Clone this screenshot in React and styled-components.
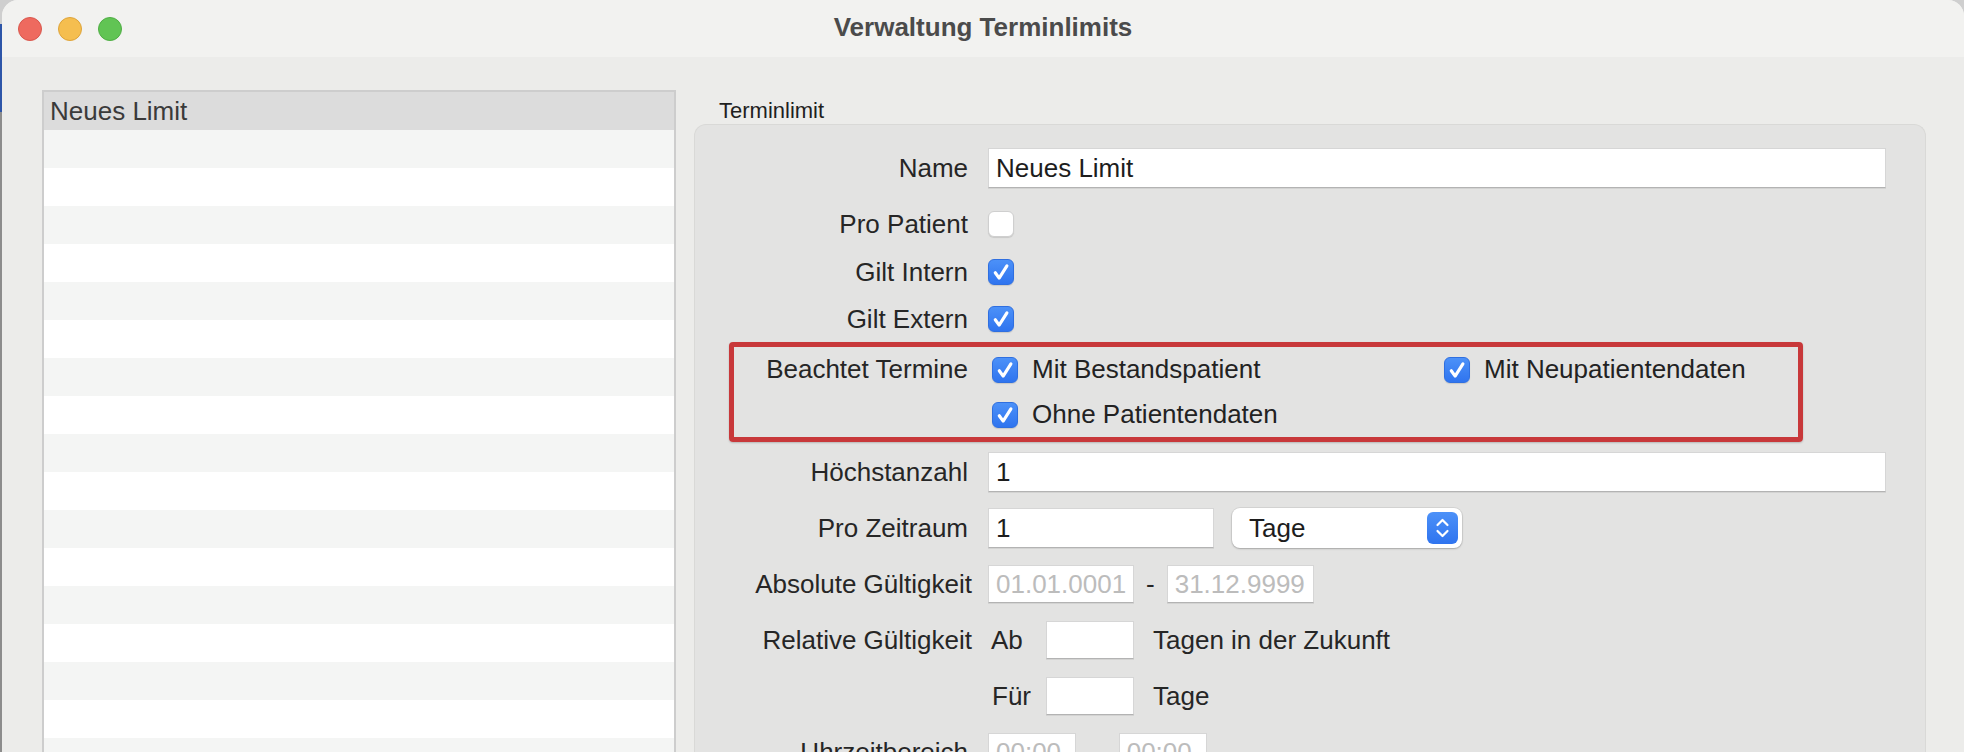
import React from "react";
import styled, { createGlobalStyle } from "styled-components";

const GlobalStyle = createGlobalStyle`
  html, body {
    margin: 0;
    padding: 0;
  }
  body {
    width: 1964px;
    height: 752px;
    overflow: hidden;
    font-family: "Liberation Sans", Arial, sans-serif;
    background: #2d55a8;
  }
`;

const Desktop = styled.div`
  display: flex;
  height: 752px;
  background: linear-gradient(
    to bottom,
    #cfcfcf 0,
    #cfcfcf 24px,
    #2d55a8 24px,
    #2d55a8 112px,
    #8c8c8c 112px
  );
`;

const Window = styled.div`
  flex: 1;
  margin-left: 2px;
  display: flex;
  flex-direction: column;
  background: #ececea;
  border-radius: 16px 16px 0 0;
  overflow: hidden;
`;

const TitleBar = styled.div`
  height: 57px;
  flex-shrink: 0;
  display: grid;
  grid-template-columns: 1fr auto 1fr;
  align-items: center;
  padding: 0 16px;
  background: #f2f2f0;
`;

const Lights = styled.div`
  display: flex;
  gap: 16px;
`;

const Light = styled.span`
  width: 24px;
  height: 24px;
  border-radius: 50%;
  box-sizing: border-box;
  background: ${(p) => p.$color};
  border: 1px solid ${(p) => p.$edge};
`;

const Title = styled.div`
  margin-top: -3px;
  font-size: 26px;
  font-weight: bold;
  color: #4b4b4b;
`;

const Body = styled.div`
  flex: 1;
  display: flex;
  gap: 18px;
  padding: 33px 38px 0 40px;
  min-height: 0;
`;

const ListPane = styled.div`
  width: 634px;
  flex-shrink: 0;
  box-sizing: border-box;
  border: 2px solid #cdcdcd;
  border-bottom: none;
  background: #fff;
  overflow: hidden;
`;

const ListRow = styled.div`
  height: 38px;
  line-height: 38px;
  padding-left: 6px;
  font-size: 26px;
  color: #3a3a3a;
  background: ${(p) =>
    p.$header ? "#dcdcdc" : p.$odd ? "#f4f5f4" : "#ffffff"};
`;

const DetailPane = styled.div`
  flex: 1;
  display: flex;
  flex-direction: column;
`;

const Legend = styled.div`
  padding: 8px 0 0 25px;
  font-size: 22px;
  line-height: 26px;
  color: #1f1f1f;
`;

const GroupBox = styled.div`
  flex: 1;
  display: flex;
  flex-direction: column;
  padding: 19px 39px 0 0;
  background: #e3e3e2;
  border: 1px solid #d9d9d7;
  border-bottom: none;
  border-radius: 12px 12px 0 0;
`;

const FormRow = styled.div`
  display: grid;
  grid-template-columns: 273px 1fr;
  column-gap: 20px;
  align-items: center;
  height: ${(p) => p.$h || 48}px;
  margin-top: ${(p) => p.$mt || 0}px;
  flex-shrink: 0;
`;

const Label = styled.div`
  text-align: right;
  white-space: nowrap;
  font-size: 26px;
  color: #262626;
  margin-right: ${(p) => p.$shift || 0}px;
`;

const Controls = styled.div`
  display: flex;
  align-items: center;
  gap: ${(p) => p.$gap || 0}px;
`;

const Field = styled.input`
  box-sizing: border-box;
  width: ${(p) => (p.$w ? `${p.$w}px` : "100%")};
  height: ${(p) => p.$h || 40}px;
  padding: 0 7px;
  border: 1px solid #d6d6d6;
  border-bottom-color: #b3b3b3;
  box-shadow: 0 1px 0 rgba(0, 0, 0, 0.07);
  background: #fff;
  font: 26px "Liberation Sans", Arial, sans-serif;
  color: #1d1d1d;
  outline: none;
  &::placeholder {
    color: #bcbcbc;
  }
`;

const Box = styled.span`
  width: 26px;
  height: 26px;
  flex-shrink: 0;
  box-sizing: border-box;
  border-radius: 6px;
  display: flex;
  align-items: center;
  justify-content: center;
  background: ${(p) =>
    p.$checked ? "linear-gradient(#4c91f8, #2f74ef)" : "#ffffff"};
  border: 1px solid ${(p) => (p.$checked ? "#2f6fe0" : "#cfcfcf")};
  box-shadow: 0 1px 1px rgba(0, 0, 0, 0.12);
`;

const Option = styled.div`
  display: flex;
  align-items: center;
  gap: 14px;
  font-size: 26px;
  color: #222;
  white-space: nowrap;
`;

const Highlight = styled.div`
  box-sizing: border-box;
  width: 1074px;
  height: 100px;
  margin-left: 34px;
  flex-shrink: 0;
  border: 5px solid #c8383a;
  border-radius: 4px;
  box-shadow: 0 1px 2px rgba(0, 0, 0, 0.2);
  display: grid;
  grid-template-columns: 234px 428px 1fr;
  grid-template-rows: 45px 45px;
  column-gap: 24px;
  align-items: center;
`;

const Select = styled.div`
  box-sizing: border-box;
  width: 230px;
  height: 40px;
  display: flex;
  align-items: center;
  justify-content: space-between;
  padding: 0 4px 0 17px;
  background: #fff;
  border-radius: 8px;
  box-shadow: 0 0 0 1px rgba(0, 0, 0, 0.06), 0 1px 2px rgba(0, 0, 0, 0.22);
  font-size: 26px;
  color: #1d1d1d;
`;

const Stepper = styled.span`
  width: 31px;
  height: 32px;
  border-radius: 6px;
  background: linear-gradient(#4c91f8, #2f74ef);
  display: flex;
  align-items: center;
  justify-content: center;
`;

const Text = styled.span`
  font-size: 26px;
  color: #262626;
  white-space: nowrap;
  width: ${(p) => (p.$w ? `${p.$w}px` : "auto")};
  padding-left: ${(p) => p.$pl || 0}px;
  box-sizing: border-box;
  flex-shrink: 0;
`;

function Check({ checked }) {
  return (
    <Box $checked={checked}>
      {checked && (
        <svg width="26" height="26" viewBox="0 0 26 26">
          <path
            d="M6.8 13.8 L11 19.6 L19.4 6.4"
            fill="none"
            stroke="#fff"
            strokeWidth="3.4"
            strokeLinecap="round"
            strokeLinejoin="round"
          />
        </svg>
      )}
    </Box>
  );
}

const listRows = Array.from({ length: 17 }, (_, i) => i);

export default function App() {
  return (
    <>
      <GlobalStyle />
      <Desktop>
        <Window>
          <TitleBar>
            <Lights>
              <Light $color="#ee6a5f" $edge="#d9574d" />
              <Light $color="#f5be4f" $edge="#dea43a" />
              <Light $color="#61c454" $edge="#4fae44" />
            </Lights>
            <Title>Verwaltung Terminlimits</Title>
            <span />
          </TitleBar>

          <Body>
            <ListPane>
              <ListRow $header>Neues Limit</ListRow>
              {listRows.map((i) => (
                <ListRow key={i} $odd={i % 2 === 0} />
              ))}
            </ListPane>

            <DetailPane>
              <Legend>Terminlimit</Legend>
              <GroupBox>
                <FormRow>
                  <Label>Name</Label>
                  <Field readOnly value="Neues Limit" />
                </FormRow>
                <FormRow $mt={8}>
                  <Label>Pro Patient</Label>
                  <Controls>
                    <Check />
                  </Controls>
                </FormRow>
                <FormRow>
                  <Label>Gilt Intern</Label>
                  <Controls>
                    <Check checked />
                  </Controls>
                </FormRow>
                <FormRow $h={46}>
                  <Label>Gilt Extern</Label>
                  <Controls>
                    <Check checked />
                  </Controls>
                </FormRow>

                <Highlight>
                  <Label>Beachtet Termine</Label>
                  <Option>
                    <Check checked />
                    Mit Bestandspatient
                  </Option>
                  <Option>
                    <Check checked />
                    Mit Neupatientendaten
                  </Option>
                  <span />
                  <Option>
                    <Check checked />
                    Ohne Patientendaten
                  </Option>
                </Highlight>

                <FormRow $h={56} $mt={2}>
                  <Label>Höchstanzahl</Label>
                  <Field readOnly value="1" />
                </FormRow>
                <FormRow $h={56}>
                  <Label>Pro Zeitraum</Label>
                  <Controls $gap={18}>
                    <Field readOnly value="1" $w={226} />
                    <Select>
                      Tage
                      <Stepper>
                        <svg width="31" height="32" viewBox="0 0 31 32">
                          <path
                            d="M10.5 13 L15.5 8 L20.5 13 M10.5 19 L15.5 24 L20.5 19"
                            fill="none"
                            stroke="#fff"
                            strokeWidth="2.2"
                            strokeLinecap="round"
                            strokeLinejoin="round"
                          />
                        </svg>
                      </Stepper>
                    </Select>
                  </Controls>
                </FormRow>
                <FormRow $h={56}>
                  <Label $shift={-4}>Absolute Gültigkeit</Label>
                  <Controls $gap={12}>
                    <Field readOnly $w={146} $h={38} placeholder="01.01.0001" />
                    <Text>-</Text>
                    <Field readOnly $w={147} $h={38} placeholder="31.12.9999" />
                  </Controls>
                </FormRow>
                <FormRow $h={56}>
                  <Label $shift={-4}>Relative Gültigkeit</Label>
                  <Controls>
                    <Text $w={58} $pl={3}>
                      Ab
                    </Text>
                    <Field readOnly $w={88} $h={38} />
                    <Text $pl={19}>Tagen in der Zukunft</Text>
                  </Controls>
                </FormRow>
                <FormRow $h={56}>
                  <span />
                  <Controls>
                    <Text $w={58} $pl={4}>
                      Für
                    </Text>
                    <Field readOnly $w={88} $h={38} />
                    <Text $pl={19}>Tage</Text>
                  </Controls>
                </FormRow>
                <FormRow $h={56}>
                  <Label>Uhrzeitbereich</Label>
                  <Controls $gap={17}>
                    <Field readOnly $w={88} $h={38} placeholder="00:00" />
                    <Text>-</Text>
                    <Field readOnly $w={88} $h={38} placeholder="00:00" />
                  </Controls>
                </FormRow>
              </GroupBox>
            </DetailPane>
          </Body>
        </Window>
      </Desktop>
    </>
  );
}
